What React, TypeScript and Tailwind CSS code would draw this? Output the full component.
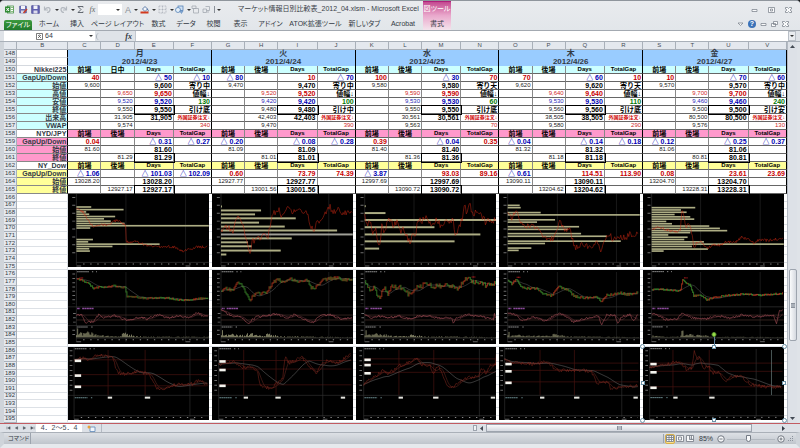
import React from "react";

type Pt = [number, number];

const JP = "font-['Liberation_Sans','Noto_Sans_CJK_JP',sans-serif]";

/* ---------- worksheet data ---------- */

type Day = {
  dow: string;
  date: string;
  second: string;
  nk: string[];
  fx: string[];
  dow30: string[];
};

const days: Day[] = [
  {
    dow: "月", date: "2012/4/23", second: "日中",
    nk: ["40", "△ 50", "△ 10", "9,600", "寄り中", "9,650", "9,520", "130", "9,550", "引け底", "31,905", "9,574", "340"],
    fx: ["0.04", "△ 0.31", "△ 0.27", "81.60", "81.29"],
    dow30: ["△ 1.06", "△ 101.03", "△ 102.09", "13028.20", "12927.17"],
  },
  {
    dow: "火", date: "2012/4/24", second: "後場",
    nk: ["△ 80", "10", "△ 70", "9,470", "寄り中", "9,520", "9,420", "100", "9,480", "引け中", "42,403", "9,470", "390"],
    fx: ["△ 0.20", "△ 0.08", "△ 0.28", "81.09", "81.01"],
    dow30: ["0.60", "73.79", "74.39", "12927.77", "13001.56"],
  },
  {
    dow: "水", date: "2012/4/25", second: "後場",
    nk: ["100", "△ 30", "70", "9,580", "寄り天", "9,590", "9,530", "60", "9,550", "引け底", "30,561", "9,563", "70"],
    fx: ["0.39", "△ 0.04", "0.35", "81.40", "81.36"],
    dow30: ["△ 3.87", "93.03", "89.16", "12997.69", "13090.72"],
  },
  {
    dow: "木", date: "2012/4/26", second: "後場",
    nk: ["70", "△ 60", "10", "9,620", "寄り天", "9,640", "9,530", "110", "9,560", "引け底", "38,505", "9,580", "290"],
    fx: ["△ 0.04", "△ 0.14", "△ 0.18", "81.32", "81.18"],
    dow30: ["△ 0.61", "114.51", "113.90", "13090.11", "13204.62"],
  },
  {
    dow: "金", date: "2012/4/27", second: "後場",
    nk: ["10", "△ 70", "△ 60", "9,570", "寄り中", "9,700", "9,460", "240", "9,500", "引け安", "80,500", "9,576", "130"],
    fx: ["△ 0.12", "△ 0.25", "△ 0.37", "81.06", "80.81"],
    dow30: ["0.08", "23.61", "23.69", "13204.70", "13228.31"],
  },
];

type Tone = "black" | "red" | "blue" | "green" | "thin" | "thinred" | "thinblue" | "head" | "headen" | "order";
type C = { t: string; tone: Tone; box?: boolean };

const tones: Record<Tone, string> = {
  black: "text-right text-[7px] font-bold text-black",
  red: "text-right text-[7px] font-bold text-[#c80000]",
  blue: "text-right text-[7px] font-bold text-[#0000b4]",
  green: "text-right text-[7px] font-bold text-[#007800]",
  thin: "text-right text-[6px] text-[#222222]",
  thinred: "text-right text-[6px] text-[#d02828]",
  thinblue: "text-right text-[6px] text-[#2828b8]",
  head: "text-center text-[7px] font-bold text-black",
  headen: "text-center text-[6px] font-bold text-black",
  order: "text-right text-[5px] font-bold text-[#d00000]",
};

const c = (t = "", tone: Tone = "black", box = false): C => ({ t, tone, box });
const gap = (t: string) => c(t, t.startsWith("△") ? "blue" : "red");
const heads = (second: string) => [c("前場", "head"), c(second, "head"), c("Days", "headen"), c("TotalGap", "headen")];

const rows: { n: number; label: string; labelBg: string; bg: string; cells: (d: Day) => C[] }[] = [
  { n: 150, label: "Nikkei225", labelBg: "bg-white", bg: "bg-[#ccffff]", cells: (d) => heads(d.second) },
  { n: 151, label: "GapUp/Down", labelBg: "bg-[#ccffff]", bg: "bg-white", cells: ({ nk }) => [gap(nk[0]), c(), gap(nk[1]), gap(nk[2])] },
  { n: 152, label: "始値", labelBg: "bg-[#ccffff]", bg: "bg-white", cells: ({ nk }) => [c(nk[3], "thin"), c(), c(nk[3]), c(nk[4])] },
  { n: 153, label: "高値", labelBg: "bg-[#ccffff]", bg: "bg-white", cells: ({ nk }) => [c(), c(nk[5], "thinred"), c(nk[5], "red"), c("値幅↓")] },
  { n: 154, label: "安値", labelBg: "bg-[#ccffff]", bg: "bg-white", cells: ({ nk }) => [c(), c(nk[6], "thinblue"), c(nk[6], "blue"), c(nk[7], "green")] },
  { n: 155, label: "終値", labelBg: "bg-[#ccffff]", bg: "bg-white", cells: ({ nk }) => [c(), c(nk[8], "thin"), c(nk[8], "black", true), c(nk[9])] },
  { n: 156, label: "出来高", labelBg: "bg-[#ccffff]", bg: "bg-white", cells: ({ nk }) => [c(), c(nk[10], "thin"), c(nk[10]), c("外国証券注文↓", "order")] },
  { n: 157, label: "VWAP", labelBg: "bg-[#ccffff]", bg: "bg-white", cells: ({ nk }) => [c(), c(nk[11], "thin"), c(), c(nk[12], "thinred")] },
  { n: 158, label: "NYD/JPY", labelBg: "bg-white", bg: "bg-[#ff99cc]", cells: () => heads("後場") },
  { n: 159, label: "GapUp/Down", labelBg: "bg-[#ff99cc]", bg: "bg-white", cells: ({ fx }) => [gap(fx[0]), c(), gap(fx[1]), gap(fx[2])] },
  { n: 160, label: "始値", labelBg: "bg-[#ff99cc]", bg: "bg-white", cells: ({ fx }) => [c(fx[3], "thin"), c(), c(fx[3]), c()] },
  { n: 161, label: "終値", labelBg: "bg-[#ff99cc]", bg: "bg-white", cells: ({ fx }) => [c(), c(fx[4], "thin"), c(fx[4], "black", true), c()] },
  { n: 162, label: "NY_Dow", labelBg: "bg-white", bg: "bg-[#ffff99]", cells: () => heads("後場") },
  { n: 163, label: "GapUp/Down", labelBg: "bg-[#ffff99]", bg: "bg-white", cells: ({ dow30 }) => [gap(dow30[0]), c(), gap(dow30[1]), gap(dow30[2])] },
  { n: 164, label: "始値", labelBg: "bg-[#ffff99]", bg: "bg-white", cells: ({ dow30 }) => [c(dow30[3], "thin"), c(), c(dow30[3]), c()] },
  { n: 165, label: "終値", labelBg: "bg-[#ffff99]", bg: "bg-white", cells: ({ dow30 }) => [c(), c(dow30[4], "thin"), c(dow30[4], "black", true), c()] },
];

const letters = "CDEFGHIJKLMNOPQRSTUV".split("");

function RowHead({ n }: { n: number }) {
  return (
    <th scope="row" className="border-r border-b border-[#a9b0b9] bg-[#e4e8ee] p-0 font-normal text-[#333a44]">
      <div className="h-[7px] text-center text-[6px] leading-[7px]">{n}</div>
    </th>
  );
}

function Sheet() {
  return (
    <table className={`w-full table-fixed border-separate border-spacing-0 whitespace-nowrap [font-feature-settings:normal] ${JP}`}>
      <colgroup>
        <col className="w-[13px]" />
        <col className="w-[51px]" />
        {days.map((d) => (
          <React.Fragment key={d.date}>
            <col className="w-[33px]" />
            <col className="w-[33px]" />
            <col className="w-[39px]" />
            <col className="w-[38px]" />
          </React.Fragment>
        ))}
      </colgroup>
      <thead>
        <tr>
          {["", "B", ...letters].map((l, i) => (
            <th key={i} scope="col" className="border-r border-b border-[#a9b0b9] bg-[#e4e8ee] p-0 font-normal text-[#444b55]">
              <div className="h-[7px] text-[6px] leading-[7px]">{l}</div>
            </th>
          ))}
        </tr>
      </thead>
      <tbody>
        {[148, 149].map((n) => (
          <tr key={n}>
            <RowHead n={n} />
            <td className="border-r border-b border-r-black border-b-[#d5d9df] bg-white p-0" />
            {days.map((d) => (
              <td key={d.date} colSpan={4} className="border-r border-black bg-[#99ccff] p-0">
                <div className="relative h-[8px] text-center text-[8px] leading-[8px] font-bold">
                  {n === 148 ? d.dow : d.date}
                </div>
              </td>
            ))}
          </tr>
        ))}
        {rows.map((r) => (
          <tr key={r.n}>
            <RowHead n={r.n} />
            <td className={`border-r border-b border-r-black border-b-[#888888] p-0 pr-px ${r.labelBg}`}>
              <div className="relative h-[7px] text-right text-[7px] leading-[7px] font-bold">{r.label}</div>
            </td>
            {days.map((d) =>
              r.cells(d).map((cell, i) => (
                <td
                  key={d.date + i}
                  className={`border-r border-b p-0 ${i === 3 ? "border-r-black" : "border-r-[#888888]"} border-b-[#666666] ${r.bg} ${cell.tone.startsWith("head") ? "" : "pr-px"} ${cell.box ? "outline outline-black" : ""}`}
                >
                  <div className={`relative h-[7px] leading-[7px] ${tones[cell.tone]}`}>{cell.t}</div>
                </td>
              ))
            )}
          </tr>
        ))}
      </tbody>
    </table>
  );
}

/* ---------- chart drawing ---------- */

const rnd = (n: number) => {
  const v = Math.sin(n * 127.1 + 11.7) * 43758.5453;
  return v - Math.floor(v) - 0.5;
};

/* Resamples a coarse series at a regular step and adds tick noise. */
function sample(pts: Pt[], step: number, amp: number): Pt[] {
  const out: Pt[] = [];
  let k = 0;
  for (let x = pts[0][0]; x <= pts[pts.length - 1][0]; x += step) {
    while (k < pts.length - 2 && pts[k + 1][0] < x) k++;
    const [x0, y0] = pts[k];
    const [x1, y1] = pts[k + 1];
    const t = Math.min(1, (x - x0) / (x1 - x0));
    out.push([x, y0 + (y1 - y0) * t + rnd(x) * amp]);
  }
  return out;
}

const toPath = (pts: Pt[]) => pts.map(([x, y], i) => `${i ? "L" : "M"}${x.toFixed(1)} ${y.toFixed(1)}`).join("");

function average(pts: Pt[], n: number): Pt[] {
  return pts.map(([x], i) => {
    const w = pts.slice(Math.max(0, i - n + 1), i + 1);
    return [x, w.reduce((s, p) => s + p[1], 0) / w.length];
  });
}

type Frame = { x: number; w: number; axis: number; v: number[] };

const frames: Frame[] = [
  { x: 204, w: 418, axis: 229, v: [376, 553] },
  { x: 3, w: 422, axis: 30, v: [178, 353] },
  { x: 435, w: 420, axis: 461, v: [608, 784] },
  { x: 12, w: 422, axis: 38, v: [187, 364] },
  { x: 443, w: 423, axis: 469, v: [616, 795] },
];

function Svg({ f, y, children }: { f: Frame; y: number; children: React.ReactNode }) {
  return (
    <svg className="block h-full w-full bg-black" viewBox={`${f.x} ${y} ${f.w} 223`} preserveAspectRatio="none" aria-hidden="true">
      {children}
    </svg>
  );
}

function TimeAxis({ f, y }: { f: Frame; y: number }) {
  const r = f.x + f.w;
  return (
    <>
      <path d={`M${f.axis} ${y}H${r}`} stroke="#3a3a3a" strokeWidth="2" />
      <path d={`M${f.axis + 20} ${y + 5}H${r - 6}`} stroke="#8a8a8a" strokeWidth="3" strokeDasharray="4 17" />
      <path d={`M${f.axis} ${y + 11}h14M${f.v[f.v.length - 1]} ${y + 11}h14`} stroke="#666666" strokeWidth="3" />
    </>
  );
}

const profiles: { bars: Pt[]; line: Pt[]; step: number; amp: number }[] = [
  {
    bars: [[49, 273], [57, 369], [64, 258], [71, 267], [78, 344], [85, 311], [92, 331], [99, 372], [106, 622], [113, 270], [148, 278], [155, 264], [162, 476], [169, 336], [176, 267], [183, 269]],
    line: [[229, 52], [240, 60], [250, 65], [258, 80], [268, 95], [280, 110], [295, 105], [310, 102], [325, 103], [340, 92], [350, 90], [365, 97], [375, 105], [376, 155], [390, 155], [403, 150], [415, 158], [430, 162], [450, 168], [470, 170], [500, 168], [525, 172], [535, 182], [550, 182], [570, 175], [590, 170], [618, 170]],
    step: 2, amp: 8,
  },
  {
    bars: [[47, 33], [59, 150], [71, 132], [83, 254], [96, 144], [108, 221], [120, 378], [132, 425], [144, 242], [156, 111], [168, 122], [181, 209], [193, 46]],
    line: [[30, 125], [42, 110], [55, 112], [66, 125], [72, 95], [85, 78], [95, 100], [102, 135], [110, 165], [118, 185], [125, 150], [135, 150], [150, 140], [165, 130], [170, 145], [180, 85], [190, 65], [205, 55], [212, 78], [225, 50], [232, 42], [240, 65], [255, 65], [262, 50], [275, 65], [290, 66], [297, 105], [308, 118], [318, 92], [335, 90], [345, 62], [357, 48], [365, 65], [378, 55], [392, 66], [424, 66]],
    step: 3, amp: 18,
  },
  {
    bars: [[46, 464], [67, 523], [88, 855], [110, 669], [132, 806], [153, 729], [175, 504]],
    line: [[461, 75], [468, 110], [478, 85], [486, 130], [495, 110], [503, 175], [512, 110], [520, 135], [530, 88], [540, 100], [550, 100], [558, 85], [565, 130], [575, 100], [585, 140], [597, 160], [603, 115], [612, 135], [620, 95], [630, 90], [640, 88], [645, 65], [655, 105], [670, 90], [690, 105], [710, 95], [725, 90], [732, 150], [740, 110], [752, 85], [758, 45], [766, 70], [776, 42], [782, 68], [800, 66], [810, 85], [818, 90], [840, 88], [853, 88]],
    step: 3, amp: 26,
  },
  {
    bars: [[44, 74], [51, 77], [66, 137], [73, 434], [88, 180], [95, 126], [109, 252], [117, 218], [130, 258], [138, 335], [153, 377], [160, 150], [174, 109], [181, 71]],
    line: [[38, 65], [50, 85], [62, 60], [75, 90], [90, 105], [110, 105], [130, 115], [140, 135], [155, 145], [175, 145], [185, 115], [195, 95], [210, 118], [225, 120], [232, 145], [240, 175], [260, 165], [290, 172], [305, 160], [318, 178], [330, 145], [345, 130], [350, 150], [370, 140], [395, 140], [405, 130], [415, 140], [430, 128]],
    step: 3, amp: 18,
  },
  {
    bars: [[51, 600], [58, 557], [65, 574], [72, 538], [79, 585], [86, 597], [93, 513], [100, 530], [107, 642], [114, 674], [121, 696], [127, 585], [134, 519], [141, 577], [148, 567], [155, 626], [162, 866], [169, 590], [177, 638], [183, 505]],
    line: [[469, 120], [485, 108], [500, 112], [520, 120], [540, 125], [555, 118], [560, 60], [566, 75], [572, 110], [580, 95], [590, 130], [596, 175], [605, 155], [620, 155], [635, 175], [650, 165], [680, 165], [690, 155], [720, 155], [740, 140], [755, 145], [775, 158], [795, 148], [820, 150], [864, 143]],
    step: 2, amp: 9,
  },
];

function ProfileChart({ i }: { i: number }) {
  const f = frames[i];
  const p = profiles[i];
  return (
    <Svg f={f} y={9}>
      {f.v.map((x) => <path key={x} d={`M${x} 9V218`} stroke="#262626" strokeWidth="2" />)}
      <path d={`M${f.axis} 9V225`} stroke="#303030" strokeWidth="2" />
      <path d={`M${f.axis - 8} 18V205`} stroke="#707070" strokeWidth="9" strokeDasharray="3 21" />
      <TimeAxis f={f} y={217} />
      {p.bars.map(([y, r]) => (
        <rect key={y} x={f.axis} y={y - 3} width={r - f.axis} height={p.bars.length < 14 ? 6 : 5} fill={i === 1 && y === 132 ? "#a0a098" : "#adad84"} />
      ))}
      <path d={toPath(sample(p.line, p.step, p.amp))} fill="none" stroke="#c82814" strokeWidth="2" strokeOpacity="0.75" />
    </Svg>
  );
}

const prices: { price: Pt[]; rsi: Pt[]; vol: Pt[]; amp: number; peak: Pt }[] = [
  {
    price: [[229, 265], [245, 270], [262, 278], [280, 295], [300, 290], [320, 291], [340, 287], [360, 291], [375, 292], [377, 320], [400, 320], [430, 325], [500, 324], [530, 330], [560, 331], [590, 326], [620, 325]],
    rsi: [[229, 375], [245, 375], [257, 400], [280, 395], [295, 375], [310, 383], [345, 378], [380, 393], [415, 382], [440, 388], [470, 375], [500, 385], [530, 378], [560, 385], [588, 368], [605, 380], [620, 378]],
    vol: [[229, 24], [245, 10], [262, 14], [276, 18], [290, 6], [350, 4], [376, 14], [395, 5], [450, 2], [620, 2]],
    amp: 4, peak: [238, 263],
  },
  {
    price: [[30, 305], [42, 295], [65, 300], [78, 280], [90, 280], [105, 312], [118, 330], [130, 313], [150, 310], [165, 308], [180, 285], [198, 265], [215, 275], [235, 265], [255, 275], [290, 270], [300, 293], [312, 292], [335, 270], [355, 265], [375, 263], [395, 268], [424, 270]],
    rsi: [[30, 360], [50, 372], [70, 382], [88, 380], [110, 402], [135, 382], [165, 378], [195, 372], [230, 385], [250, 375], [280, 390], [305, 399], [325, 378], [360, 375], [385, 388], [424, 385]],
    vol: [[30, 22], [40, 6], [75, 10], [100, 5], [115, 14], [150, 7], [175, 10], [200, 4], [300, 2], [420, 1]],
    amp: 9, peak: [370, 260],
  },
  {
    price: [[461, 275], [475, 300], [490, 290], [503, 325], [520, 295], [530, 315], [545, 285], [560, 295], [575, 290], [590, 315], [610, 295], [630, 290], [643, 275], [660, 290], [700, 287], [725, 290], [735, 300], [750, 280], [765, 265], [785, 275], [800, 280], [815, 285], [853, 278]],
    rsi: [[461, 375], [480, 385], [500, 378], [530, 386], [560, 378], [590, 388], [620, 380], [650, 378], [680, 386], [720, 385], [725, 402], [735, 385], [765, 375], [800, 380], [845, 388], [849, 368], [853, 400]],
    vol: [[461, 20], [475, 6], [503, 12], [540, 4], [600, 7], [640, 3], [853, 1]],
    amp: 15, peak: [780, 260],
  },
  {
    price: [[38, 270], [50, 282], [62, 268], [80, 290], [100, 295], [125, 295], [140, 310], [170, 317], [188, 290], [215, 298], [240, 320], [265, 325], [300, 322], [320, 333], [335, 315], [350, 315], [375, 308], [400, 314], [430, 308]],
    rsi: [[38, 370], [60, 375], [80, 392], [115, 382], [150, 395], [185, 372], [205, 375], [235, 397], [280, 385], [310, 380], [320, 404], [335, 375], [360, 378], [368, 402], [380, 380], [405, 375], [415, 395], [430, 372]],
    vol: [[38, 22], [44, 4], [75, 7], [110, 4], [150, 7], [185, 9], [210, 4], [300, 2], [430, 1]],
    amp: 7, peak: [65, 261],
  },
  {
    price: [[469, 300], [490, 297], [520, 300], [555, 303], [562, 268], [575, 280], [585, 285], [595, 318], [615, 315], [635, 330], [660, 322], [700, 316], [750, 312], [790, 316], [863, 310]],
    rsi: [[469, 372], [490, 378], [510, 390], [545, 388], [562, 370], [590, 385], [630, 388], [670, 378], [700, 386], [740, 376], [780, 382], [810, 378], [835, 376], [843, 404], [852, 362], [863, 362]],
    vol: [[469, 5], [500, 2], [555, 2], [560, 26], [566, 8], [590, 16], [600, 6], [625, 7], [650, 2], [863, 1]],
    amp: 4, peak: [566, 263],
  },
];

function CandleChart({ i }: { i: number }) {
  const f = frames[i];
  const p = prices[i];
  const r = f.x + f.w;
  const s = sample(p.price, 3, p.amp);
  const flat = sample(p.price, 3, 0);
  return (
    <Svg f={f} y={239}>
      {f.v.map((x) => <path key={x} d={`M${x} 245V458`} stroke="#262626" strokeWidth="2" />)}
      <path d={`M${f.axis} 239V458`} stroke="#303030" strokeWidth="2" />
      <path d={`M${f.x} 351H${r}M${f.x} 408H${r}`} stroke="#383838" strokeWidth="2" />
      <path d={`M${f.axis} 376H${r}M${f.axis} 391H${r}`} stroke="#4a302c" strokeWidth="2" />
      <path d={`M${f.axis - 8} 250V342M${f.axis - 6} 370V402M${f.axis - 8} 421V440`} stroke="#6c6c6c" strokeWidth="8" strokeDasharray="3 10" />
      <path d={`M${f.axis + 2} 244h36m8 0h4m8 0h3M${f.axis + 2} 412h32m10 0h4`} stroke="#8a8a8a" strokeWidth="3" strokeDasharray="5 1" />
      <path d={`M${f.axis + 2} 356h9m6 0h34`} stroke="#8a4a9a" strokeWidth="4" strokeDasharray="6 1" />
      <path d={toPath(average(flat, 14))} fill="none" stroke="#666666" strokeWidth="1.5" />
      {s.slice(1).map(([x, y], k) => {
        const y0 = s[k][1];
        const falling = y - y0 + rnd(x + 5) * 4 > 0;
        return <path key={k} d={`M${x} ${Math.min(y, y0) - 2}V${Math.max(y, y0) + 2}`} stroke={falling ? "#48a834" : "#d84424"} strokeWidth="2.4" strokeOpacity="0.85" />;
      })}
      <path d={`M${p.peak[0]} ${p.peak[1]}h12`} stroke="#c02020" strokeWidth="3" strokeDasharray="3 1" />
      <path d={toPath(average(sample(p.rsi, 3, 0), 7))} fill="none" stroke="#5a2c34" strokeWidth="2" />
      <path d={toPath(sample(p.rsi, 3, 7))} fill="none" stroke="#a85058" strokeWidth="1.8" />
      {sample(p.vol, 3, 0).map(([x, h], k) => (
        <rect key={k} x={x} y={444 - h * (0.75 + rnd(k + 3) * 1.1)} width="2" height={h * (0.75 + rnd(k + 3) * 1.1)} fill="#b4b48c" />
      ))}
      <TimeAxis f={f} y={446} />
    </Svg>
  );
}

const trends: { line: Pt[]; h: number[]; v: number[]; g: number; tags: number[]; axis: number; white?: number }[] = [
  {
    line: [[222, 74], [245, 70], [265, 75], [290, 60], [315, 62], [335, 68], [352, 115], [380, 118], [410, 110], [445, 118], [465, 160], [490, 162], [510, 152], [540, 150], [575, 148], [590, 138], [618, 150]],
    h: [75, 120, 154], v: [323, 433], g: 566, tags: [322, 432], axis: 222,
  },
  {
    line: [[23, 88], [45, 85], [70, 82], [100, 100], [120, 95], [140, 115], [148, 155], [180, 162], [200, 145], [215, 130], [222, 68], [235, 85], [255, 78], [270, 65], [290, 90], [300, 105], [315, 115], [330, 88], [350, 78], [375, 85], [395, 75], [420, 55]],
    h: [77, 103, 151], v: [98, 195], g: 335, tags: [98, 193, 389], axis: 23,
  },
  {
    line: [[458, 150], [480, 130], [500, 120], [515, 108], [530, 120], [560, 95], [590, 85], [612, 68], [630, 90], [655, 92], [665, 115], [680, 95], [690, 110], [705, 155], [725, 160], [745, 140], [770, 130], [800, 125], [810, 105], [825, 115], [835, 90], [852, 90], [854, 55]],
    h: [72, 88, 113], v: [563, 667], g: 803, tags: [562, 665, 837], axis: 458,
  },
  {
    line: [[28, 72], [45, 85], [80, 85], [120, 88], [155, 80], [180, 105], [215, 108], [250, 105], [290, 112], [305, 145], [335, 142], [348, 163], [370, 158], [428, 153]],
    h: [85, 107, 142], v: [135, 238], g: 380, tags: [135, 237, 415], axis: 29,
  },
  {
    line: [[462, 98], [490, 90], [520, 88], [550, 80], [575, 105], [590, 100], [597, 50], [605, 75], [612, 65], [625, 100], [640, 92], [650, 115], [670, 115], [690, 140], [710, 125], [740, 125], [765, 150], [800, 155], [858, 158]],
    h: [85, 110, 157], v: [533, 642], g: 783, tags: [534, 642], axis: 463, white: 829,
  },
];

function TrendChart({ i }: { i: number }) {
  const f = frames[i];
  const t = trends[i];
  const r = f.x + f.w;
  const flat = sample(t.line, 3, 0);
  return (
    <Svg f={f} y={36}>
      {t.h.map((y) => <path key={y} d={`M${t.axis} ${y}H${r - 4}`} stroke="#4a1410" strokeWidth="2" />)}
      {t.v.map((x) => <path key={x} d={`M${x} 45V183`} stroke="#4a1410" strokeWidth="2" />)}
      <path d={`M${t.g} 42V248M${t.axis} 36V255M${f.x} 183H${r}`} stroke="#303030" strokeWidth="2" />
      <path d={`M${t.axis - 9} 46V170`} stroke="#6c6c6c" strokeWidth="8" strokeDasharray="3 12" />
      <path d={`M${t.axis + 2} 41h36m8 0h4m8 0h3`} stroke="#8a8a8a" strokeWidth="3" strokeDasharray="5 1" />
      <path d={`M${t.axis + 2} 190h38m10 0h4`} stroke="#6a8a8e" strokeWidth="3" strokeDasharray="5 1" />
      {t.white && <path d={`M${t.white} 45V182`} stroke="#6c8080" strokeWidth="2" />}
      <path d={toPath(average(flat, 26))} fill="none" stroke="#5e5e5e" strokeWidth="2" />
      <path d={toPath(average(flat, 6))} fill="none" stroke="#6a2c24" strokeWidth="1.6" />
      <path d={toPath(sample(t.line, 3, 11))} fill="none" stroke="#84281e" strokeWidth="1.6" />
      {t.h.map((y) => <rect key={y} x={t.axis + 2} y={y - 1} width="19" height="8" fill="#f4f4ee" />)}
      {t.tags.map((x, k) => <rect key={x} x={x} y="187" width={k === 1 ? 16 : 13} height="6" fill="#e6e6e0" />)}
      <TimeAxis f={{ ...f, axis: t.axis, v: [t.g] }} y={245} />
    </Svg>
  );
}

function SelectionHandles() {
  return (
    <div className="pointer-events-none absolute inset-0">
      <span className="absolute -top-[14px] left-1/2 h-[14px] w-px bg-[#5a7f9c]" />
      <span className="absolute -top-[15px] left-1/2 size-[5px] -translate-x-1/2 rounded-full border border-[#5c9a2e] bg-[#9be04a]" />
      <span className="absolute -top-[3px] -left-[3px] size-[5px] rounded-full border border-[#6d93a8] bg-white" />
      <span className="absolute -top-[3px] -right-[3px] size-[5px] rounded-full border border-[#6d93a8] bg-white" />
      <span className="absolute -bottom-[3px] -left-[3px] size-[5px] rounded-full border border-[#6d93a8] bg-white" />
      <span className="absolute -right-[3px] -bottom-[3px] size-[5px] rounded-full border border-[#6d93a8] bg-white" />
      <span className="absolute -top-[2px] left-1/2 size-[4px] -translate-x-1/2 border border-[#6d93a8] bg-white" />
      <span className="absolute -bottom-[2px] left-1/2 size-[4px] -translate-x-1/2 border border-[#6d93a8] bg-white" />
      <span className="absolute top-1/2 -left-[2px] size-[4px] -translate-y-1/2 border border-[#6d93a8] bg-white" />
      <span className="absolute top-1/2 -right-[2px] size-[4px] -translate-y-1/2 border border-[#6d93a8] bg-white" />
    </div>
  );
}

function ChartArea() {
  const lower = Array.from({ length: 30 }, (_, k) => 166 + k);
  return (
    <div className="relative flex min-h-0 flex-1 flex-col bg-white">
      {lower.map((n) => (
        <div key={n} className="flex min-h-0 flex-1">
          <div className="flex w-[13px] items-center justify-center border-r border-b border-[#a9b0b9] bg-[#e4e8ee] text-[6px] leading-[7px] text-[#333a44]">{n}</div>
          <div className="w-[51px] border-r border-b border-[#dde1e6]" />
          <div className="flex-1 border-b border-[#dde1e6]" />
        </div>
      ))}
      <div className="absolute inset-y-0 right-[3px] bottom-[3px] left-[64px] grid grid-cols-5 grid-rows-3 gap-[3px]">
        {frames.map((f, i) => <div key={`p${f.x}`} className="min-h-0"><ProfileChart i={i} /></div>)}
        {frames.map((f, i) => <div key={`c${f.x}`} className="min-h-0"><CandleChart i={i} /></div>)}
        {frames.map((f, i) => (
          <div key={`t${f.x}`} className="relative min-h-0">
            <TrendChart i={i} />
            {i === 4 && <SelectionHandles />}
          </div>
        ))}
      </div>
    </div>
  );
}

/* ---------- window chrome ---------- */

function Caret() {
  return <svg className="h-[2px] w-[4px] shrink-0" viewBox="0 0 4 2" aria-hidden="true"><path d="M0 0h4L2 2z" fill="#333" /></svg>;
}

function Tool({ label, w, caret, children }: { label: string; w: string; caret?: boolean; children: React.ReactNode }) {
  return (
    <button aria-label={label} className={`flex h-[10px] shrink-0 items-center gap-[3px] ${w}`}>
      <svg className="size-[9px] shrink-0" viewBox="0 0 18 18" fill="none" aria-hidden="true">{children}</svg>
      {caret && <Caret />}
    </button>
  );
}

function QuickAccess() {
  return (
    <div className="flex items-center pl-[1px]">
      <Tool label="Excel" w="w-[14px]">
        <rect x="5" y="2" width="12" height="14" fill="#fff" stroke="#3b8a3b" strokeWidth="1.5" />
        <path d="M12 5h4M12 9h4M12 13h4" stroke="#6aaa5a" strokeWidth="1.5" />
        <rect x="0" y="3" width="11" height="12" fill="#2f8a34" />
        <path d="M3 6l5 6M8 6l-5 6" stroke="#fff" strokeWidth="2" />
      </Tool>
      <Tool label="名前を付けて保存" w="w-[12px]">
        <rect x="1" y="2" width="14" height="14" rx="1" fill="#6a6fb4" stroke="#4a4f8c" />
        <rect x="4" y="2" width="8" height="6" fill="#f4f4fa" />
        <rect x="4" y="11" width="7" height="5" fill="#d8d8e6" />
        <path d="M16 8l-7 8" stroke="#c83c28" strokeWidth="3" />
      </Tool>
      <Tool label="上書き保存" w="w-[12px]">
        <rect x="1" y="1" width="16" height="16" rx="1" fill="#6060b0" stroke="#46468c" />
        <rect x="5" y="1" width="8" height="7" fill="#f2f2fa" />
        <rect x="5" y="11" width="8" height="6" fill="#dcdcec" />
      </Tool>
      <Tool label="元に戻す" w="w-[16px]" caret>
        <path d="M3 3v7h7M4 9c4-6 11-4 10 1-1 4-4 5-6 5" stroke="#b4b9c0" strokeWidth="2.4" />
      </Tool>
      <Tool label="やり直し" w="w-[17px]" caret>
        <path d="M15 3v7H8M14 9C10 3 3 5 4 10c1 4 4 5 6 5" stroke="#b4b9c0" strokeWidth="2.4" />
      </Tool>
      <Tool label="オート SUM" w="w-[11px]"><path d="M14 5V3H4l6 6-6 6h10v-2" stroke="#555b64" strokeWidth="1.8" /></Tool>
      <button aria-label="関数の挿入" className="w-[11px] text-center font-['Liberation_Serif',serif] text-[8px] leading-[10px] text-[#666] italic">fx</button>
      <label className="flex h-[11px] w-[24px] items-center bg-white">
        <select aria-label="フォント サイズ" className="h-[10px] w-[18px] appearance-none bg-white text-[6px]"><option></option></select>
        <Caret />
      </label>
      <button className="flex w-[18px] items-center gap-[3px] pl-[3px] text-[9px] leading-[10px] text-[#8a9098]" aria-label="フォントの色">A<Caret /></button>
      <Tool label="塗りつぶしの色" w="w-[18px]" caret>
        <path d="M5 8l5-5 5 5-5 5z" fill="#f2f5fa" stroke="#3a5f96" strokeWidth="1.6" />
        <path d="M14 8c3 1 3 4 2 5" stroke="#3a5f96" strokeWidth="1.6" />
        <rect x="1" y="13" width="16" height="4" fill="#d23a1e" />
      </Tool>
      <Tool label="罫線" w="w-[17px]" caret>
        <path d="M2 2h14v14H2zM9 2v14M2 9h14" stroke="#a7adb6" strokeWidth="1.4" strokeDasharray="2 1" />
      </Tool>
      <Tool label="図形" w="w-[16px]" caret>
        <rect x="6" y="2" width="10" height="9" fill="#cfe0f2" stroke="#4f7db4" strokeWidth="1.5" />
        <circle cx="6" cy="10" r="5" fill="#e6f0fa" stroke="#4f7db4" strokeWidth="1.5" />
        <path d="M9 12l4 5 3-5z" fill="#8cb0d8" stroke="#4f7db4" />
      </Tool>
      <Tool label="前面へ移動" w="w-[11px]">
        <path d="M2 2h8v5H2zM5 7h10v9H5z" stroke="#a0a5ad" strokeWidth="1.5" fill="#e8eaed" />
      </Tool>
      <Tool label="回転" w="w-[10px]">
        <path d="M2 8h7v7H2zM7 3h8v8H9M12 11v5" stroke="#a0a5ad" strokeWidth="1.5" />
      </Tool>
      <span className="mx-[2px] h-[7px] w-px bg-[#8a9098]" />
      <Caret />
    </div>
  );
}

const tabs: [string, string][] = [
  ["ホーム", "w-[30px]"], ["挿入", "w-[26px]"], ["ページ レイアウト", "w-[55px]"], ["数式", "w-[27px]"], ["データ", "w-[28px]"],
  ["校閲", "w-[27px]"], ["表示", "w-[27px]"], ["アドイン", "w-[33px]"], ["ATOK拡張ツール", "w-[57px]"], ["新しいタブ", "w-[41px]"], ["Acrobat", "w-[36px]"],
];

function WinGlyph({ label, d }: { label: string; d: string }) {
  return (
    <button aria-label={label} className="flex items-center">
      <svg className="h-[6px] w-[7px]" viewBox="0 0 14 12" fill="#fafbfc" stroke="#747b85" strokeWidth="1.4" aria-hidden="true"><path d={d} /></svg>
    </button>
  );
}

const crossD = "M1 1h4l2 2 2-2h4v3l-3 2 3 2v3H9L7 9l-2 2H1V8l3-2-3-2z";

function ViewIcon({ label, on, d }: { label: string; on?: boolean; d: string }) {
  return (
    <button aria-label={label} className={`flex size-[10px] items-center justify-center rounded-[2px] ${on ? "border border-[#d8b04a] bg-[#fbe08a]" : ""}`}>
      <svg className="h-[7px] w-[8px]" viewBox="0 0 16 14" fill="#f8f9fa" stroke="#737a84" strokeWidth="1.6" aria-hidden="true"><path d={d} /></svg>
    </button>
  );
}

export default function App() {
  return (
    <div className="bg-[#17181a]">
      <div className={`flex h-screen min-h-[448px] flex-col overflow-hidden rounded-t-[4px] border-t border-t-[#8f959c] bg-[#dfe3e8] text-[#333a44] [font-feature-settings:'palt'] ${JP}`}>
        {/* title bar and ribbon tabs */}
        <header className="relative flex h-[30px] shrink-0 flex-col border-b border-[#a3a9b1] bg-linear-to-b from-[#e9ebee] to-[#e2e6ea]">
          <div className="flex h-[17px] items-center justify-between pr-[8px] pl-[4px]">
            <QuickAccess />
            <div className="flex items-center gap-[10px]">
              <WinGlyph label="最小化" d="M2 5h10v4H2z" />
              <WinGlyph label="元に戻す" d="M1 1h12v10H1zM5 4h4v4H5z" />
              <WinGlyph label="閉じる" d={crossD} />
            </div>
          </div>
          <h1 className="absolute top-[2px] left-[238px] text-[7px] leading-[11px] whitespace-nowrap text-[#3a3f48]">
            マーケット情報日別比較表_2012_04.xlsm - Microsoft Excel
          </h1>
          <div className="absolute inset-y-0 left-[423px] flex w-[28px] flex-col bg-linear-to-b from-[#c0408c] via-[#e9a8cc] to-[#f3e4ec] text-center text-[7px] whitespace-nowrap">
            <span className="h-[17px] border-t border-[#b0207c] leading-[14px] text-white">図ツール</span>
            <button className="h-[12px] leading-[12px] text-[#333a44]">書式</button>
          </div>
          <nav className="flex h-[12px] items-center pr-[11px] pl-[4px] text-[7px] leading-[12px] whitespace-nowrap">
            <button className="mr-[2px] h-[10px] w-[28px] self-end rounded-t-[2px] bg-linear-to-b from-[#3c9a3e] to-[#1f7a2c] leading-[10px] text-white">ファイル</button>
            {tabs.map(([t, w]) => (
              <button key={t} className={`flex shrink-0 justify-center ${w}`}>{t}</button>
            ))}
            <div className="ml-auto flex items-center gap-[4px]">
              <WinGlyph label="リボンの最小化" d="M2 4h10L7 9z" />
              <button aria-label="ヘルプ" className="flex size-[8px] items-center justify-center rounded-full bg-[#3a72b8] text-[7px] leading-[8px] font-bold text-white">?</button>
              <WinGlyph label="ウィンドウの最小化" d="M2 5h10v4H2z" />
              <WinGlyph label="ウィンドウを元に戻す" d="M5 1h8v6H5zM1 5h8v6H1z" />
              <WinGlyph label="ウィンドウを閉じる" d={crossD} />
            </div>
          </nav>
        </header>

        {/* formula bar */}
        <div className="flex h-[11px] shrink-0 items-stretch border-b border-[#a9b0b9] pr-[4px] pl-[4px] text-[7px]">
          <label className="flex w-[91px] items-center gap-[2px] bg-white pl-[32px]">
            <svg className="size-[7px] shrink-0" viewBox="0 0 14 14" fill="none" stroke="#444" strokeWidth="1.4" aria-hidden="true"><path d="M1 1h12v12H1zM4 4l6 6M10 4l-6 6M7 3v2" /></svg>
            <input aria-label="名前ボックス" defaultValue="64" className="h-[10px] w-[42px] bg-white text-[7px] leading-[10px] outline-none" />
            <Caret />
          </label>
          <div className="flex w-[40px] items-center justify-between bg-[#dfe3e8] pr-[3px] pl-[1px]">
            <span className="size-[7px] rounded-l-full border-l border-[#a9b0b9]" />
            <button aria-label="関数の挿入" className="font-['Liberation_Serif',serif] text-[8px] leading-[9px] font-bold italic">fx</button>
          </div>
          <input aria-label="数式バー" className="min-w-0 flex-1 border-l border-[#c3c8cf] bg-white outline-none" />
          <button aria-label="数式バーの展開" className="flex w-[8px] items-center justify-center border border-[#b9bfc7] bg-[#e9ecf0]"><Caret /></button>
        </div>

        {/* worksheet */}
        <main className="flex min-h-0 flex-1 border-l-4 border-[#cfd4da] pr-[3px]">
          <div className="flex min-w-0 flex-1 flex-col">
            <Sheet />
            <ChartArea />
          </div>
          <div className="flex w-[10px] shrink-0 flex-col items-center border-l border-[#b4bac3] bg-[#dde1e7]" role="presentation">
            <svg className="my-[3px] h-[3px] w-[5px]" viewBox="0 0 10 6" aria-hidden="true"><path d="M0 6L5 0l5 6z" fill="#444b55" /></svg>
            <span className="flex-[221]" />
            <span className="flex w-[8px] flex-[71] items-center justify-center rounded-[2px] border border-[#9da4ae] bg-linear-to-r from-[#fafbfc] to-[#d5d9e0]">
              <span className="h-[5px] w-[4px] border-y border-[#8b929c] bg-[#aab0b9]" />
            </span>
            <span className="flex-[74]" />
            <svg className="my-[3px] h-[3px] w-[5px]" viewBox="0 0 10 6" aria-hidden="true"><path d="M0 0L5 6l5-6z" fill="#444b55" /></svg>
          </div>
        </main>

        {/* sheet tabs and horizontal scroll bar */}
        <div className="flex h-[9px] shrink-0 items-stretch border-t border-t-[#c25b62] bg-[#dde1e7] pr-[4px] pl-[4px]">
          <div className="flex w-[32px] items-center justify-around text-[#444b55]">
            {["M2 0v6M9 0L4 3l5 3z", "M8 0L3 3l5 3z", "M3 0l5 3-5 3z", "M9 0v6M2 0l5 3-5 3z"].map((d) => (
              <button key={d} aria-label="シート見出しの移動" className="flex">
                <svg className="h-[4px] w-[5px]" viewBox="0 0 11 6" fill="currentColor" stroke="currentColor" strokeWidth="1" aria-hidden="true"><path d={d} /></svg>
              </button>
            ))}
          </div>
          <button className="w-[46px] bg-white text-center text-[7px] leading-[8px] whitespace-nowrap text-[#444b55] [font-feature-settings:normal]">4．2～5．4</button>
          <button aria-label="ワークシートの挿入" className="flex w-[20px] items-center justify-center border-r border-[#b4bac3]">
            <svg className="h-[7px] w-[9px]" viewBox="0 0 18 14" aria-hidden="true"><path d="M6 4h10v9H6z" fill="#f2f6fb" stroke="#5b86b8" strokeWidth="1.6" /><circle cx="4" cy="4" r="3" fill="#e8a23a" /></svg>
          </button>
          <span className="flex-[372]" />
          <span className="my-px w-[4px] border border-[#9da4ae] bg-[#f0f2f5]" />
          <span className="flex w-[9px] items-center justify-center"><svg className="h-[5px] w-[3px]" viewBox="0 0 6 10" aria-hidden="true"><path d="M6 0v10L0 5z" fill="#444b55" /></svg></span>
          <span className="flex flex-[264] items-center justify-center border border-[#9da4ae] bg-linear-to-b from-[#fafbfc] to-[#d5d9e0]">
            <span className="h-[4px] w-[5px] border-x border-[#8b929c] bg-[#b4bac3]" />
          </span>
          <span className="flex-[30]" />
          <span className="flex w-[14px] items-center"><svg className="h-[5px] w-[3px]" viewBox="0 0 6 10" aria-hidden="true"><path d="M0 0v10l6-5z" fill="#333a44" /></svg></span>
        </div>

        {/* status bar */}
        <footer className="flex h-[16px] shrink-0 items-start border-x-4 border-t border-b-4 border-x-[#cfd4da] border-t-[#aab0b8] border-b-[#e6e9ed] bg-linear-to-b from-[#dde0e5] to-[#bfc5cc] text-[6px] leading-[11px] whitespace-nowrap">
          <span className="h-[11px] w-[27px] border-r border-[#9da4ae] pl-[4px]">コマンド</span>
          <div className="ml-auto flex h-[11px] items-center pr-[2px]">
            <span className="mr-[1px] h-[9px] w-px bg-[#9da4ae]" />
            <ViewIcon label="標準" on d="M1 1h14v12H1zM6 1v12M11 1v12M1 5h14M1 9h14" />
            <ViewIcon label="ページ レイアウト" d="M1 1h14v12H1zM5 4h6v6H5z" />
            <ViewIcon label="改ページ プレビュー" d="M1 1h14v12H1zM7 1v8h8M11 1v8" />
            <span className="w-[22px] text-center text-[7px]">85%</span>
            <button aria-label="縮小" className="flex"><svg className="size-[8px]" viewBox="0 0 16 16" fill="#f4f6f8" stroke="#666d77" strokeWidth="1.8" aria-hidden="true"><circle cx="8" cy="8" r="6.5" /><path d="M5 8h6" /></svg></button>
            <input
              type="range"
              aria-label="ズーム"
              min={0}
              max={100}
              defaultValue={44}
              className="mx-[2px] h-[8px] w-[48px] appearance-none bg-linear-to-b from-transparent from-45% via-[#8b929c] via-50% to-transparent to-60% [&::-webkit-slider-thumb]:h-[7px] [&::-webkit-slider-thumb]:w-[5px] [&::-webkit-slider-thumb]:appearance-none [&::-webkit-slider-thumb]:rounded-b-full [&::-webkit-slider-thumb]:border [&::-webkit-slider-thumb]:border-[#747b85] [&::-webkit-slider-thumb]:bg-[#f8f9fa]"
            />
            <button aria-label="拡大" className="flex"><svg className="size-[8px]" viewBox="0 0 16 16" fill="#f4f6f8" stroke="#666d77" strokeWidth="1.8" aria-hidden="true"><circle cx="8" cy="8" r="6.5" /><path d="M5 8h6M8 5v6" /></svg></button>
            <svg className="ml-[3px] size-[6px]" viewBox="0 0 6 6" fill="#8b929c" aria-hidden="true"><path d="M4 0h1v1H4zM2 2h1v1H2zM4 2h1v1H4zM0 4h1v1H0zM2 4h1v1H2zM4 4h1v1H4z" /></svg>
          </div>
        </footer>
      </div>
    </div>
  );
}
